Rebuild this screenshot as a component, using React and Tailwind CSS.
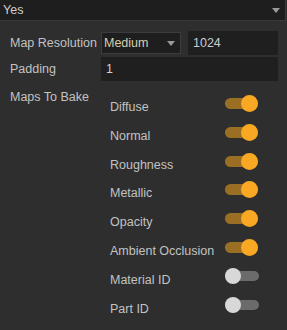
import React, { useState } from 'react';

const maps = [
  { name: 'Diffuse', on: true },
  { name: 'Normal', on: true },
  { name: 'Roughness', on: true },
  { name: 'Metallic', on: true },
  { name: 'Opacity', on: true },
  { name: 'Ambient Occlusion', on: true },
  { name: 'Material ID', on: false },
  { name: 'Part ID', on: false },
];

function Toggle({ on, onClick }) {
  return (
    <button onClick={onClick} className="relative w-[34px] h-[17px] flex items-center">
      <span
        className={
          on
            ? 'absolute left-0 right-[1px] h-[11px] rounded-full bg-[#9a6f24]'
            : 'absolute left-0 right-0 h-[10px] rounded-full bg-[#6b6b6b]'
        }
      />
      {on ? (
        <span className="absolute right-[1px] w-[17px] h-[17px] rounded-full bg-[#f8a823]" />
      ) : (
        <span className="absolute left-0 w-[16px] h-[16px] rounded-full bg-[#d8d8d8]" />
      )}
    </button>
  );
}

function Caret() {
  return (
    <svg width="8" height="5" viewBox="0 0 8 5">
      <path d="M0 0 L8 0 L4 5 Z" fill="#9a9a9a" />
    </svg>
  );
}

export default function App() {
  const [items, setItems] = useState(maps);

  const flip = (i) => {
    setItems(items.map((m, j) => (j === i ? { ...m, on: !m.on } : m)));
  };

  return (
    <div
      className="w-[287px] h-[330px] bg-[#2e2e2e] text-[#c2c2c2] text-[12.5px] leading-[15px] overflow-hidden"
      style={{ fontFamily: '"Liberation Sans", Arial, sans-serif' }}
    >
      <div className="h-[21px] mr-[1px] bg-[#1e1e1e] border-r border-b border-[#3a3a3a] flex items-center justify-between pl-[3px] pr-[5px]">
        <span className="text-[#cfcfcf]">Yes</span>
        <Caret />
      </div>

      <div className="pl-[10px] pt-[10px]">
        <div className="flex items-center h-[24px]">
          <span className="w-[91px]">Map Resolution</span>
          <div className="w-[80px] h-[22px] bg-[#1e1e1e] border border-[#3c3c3c] flex items-center justify-between pl-[2px] pr-[5px]">
            <span className="text-[#d6cfae]">Medium</span>
            <Caret />
          </div>
          <div className="ml-[7px] w-[90px] h-[24px] bg-[#1f1f1f] flex items-center pl-[5px] text-[#c8ccd2]">
            1024
          </div>
        </div>

        <div className="flex items-center h-[24px] mt-[2px]">
          <span className="w-[91px]">Padding</span>
          <div className="w-[177px] h-[24px] bg-[#1f1f1f] flex items-center pl-[5px] text-[#cfcfcf]">
            1
          </div>
        </div>

        <div className="flex mt-[9px]">
          <span className="w-[100px]">Maps To Bake</span>
          <div className="pt-[3px]">
            {items.map((m, i) => (
              <div key={m.name} className="flex items-start h-[28.8px]">
                <span className="w-[115px] pt-[7px]">{m.name}</span>
                <div className="mt-[2px]">
                  <Toggle on={m.on} onClick={() => flip(i)} />
                </div>
              </div>
            ))}
          </div>
        </div>
      </div>
    </div>
  );
}
